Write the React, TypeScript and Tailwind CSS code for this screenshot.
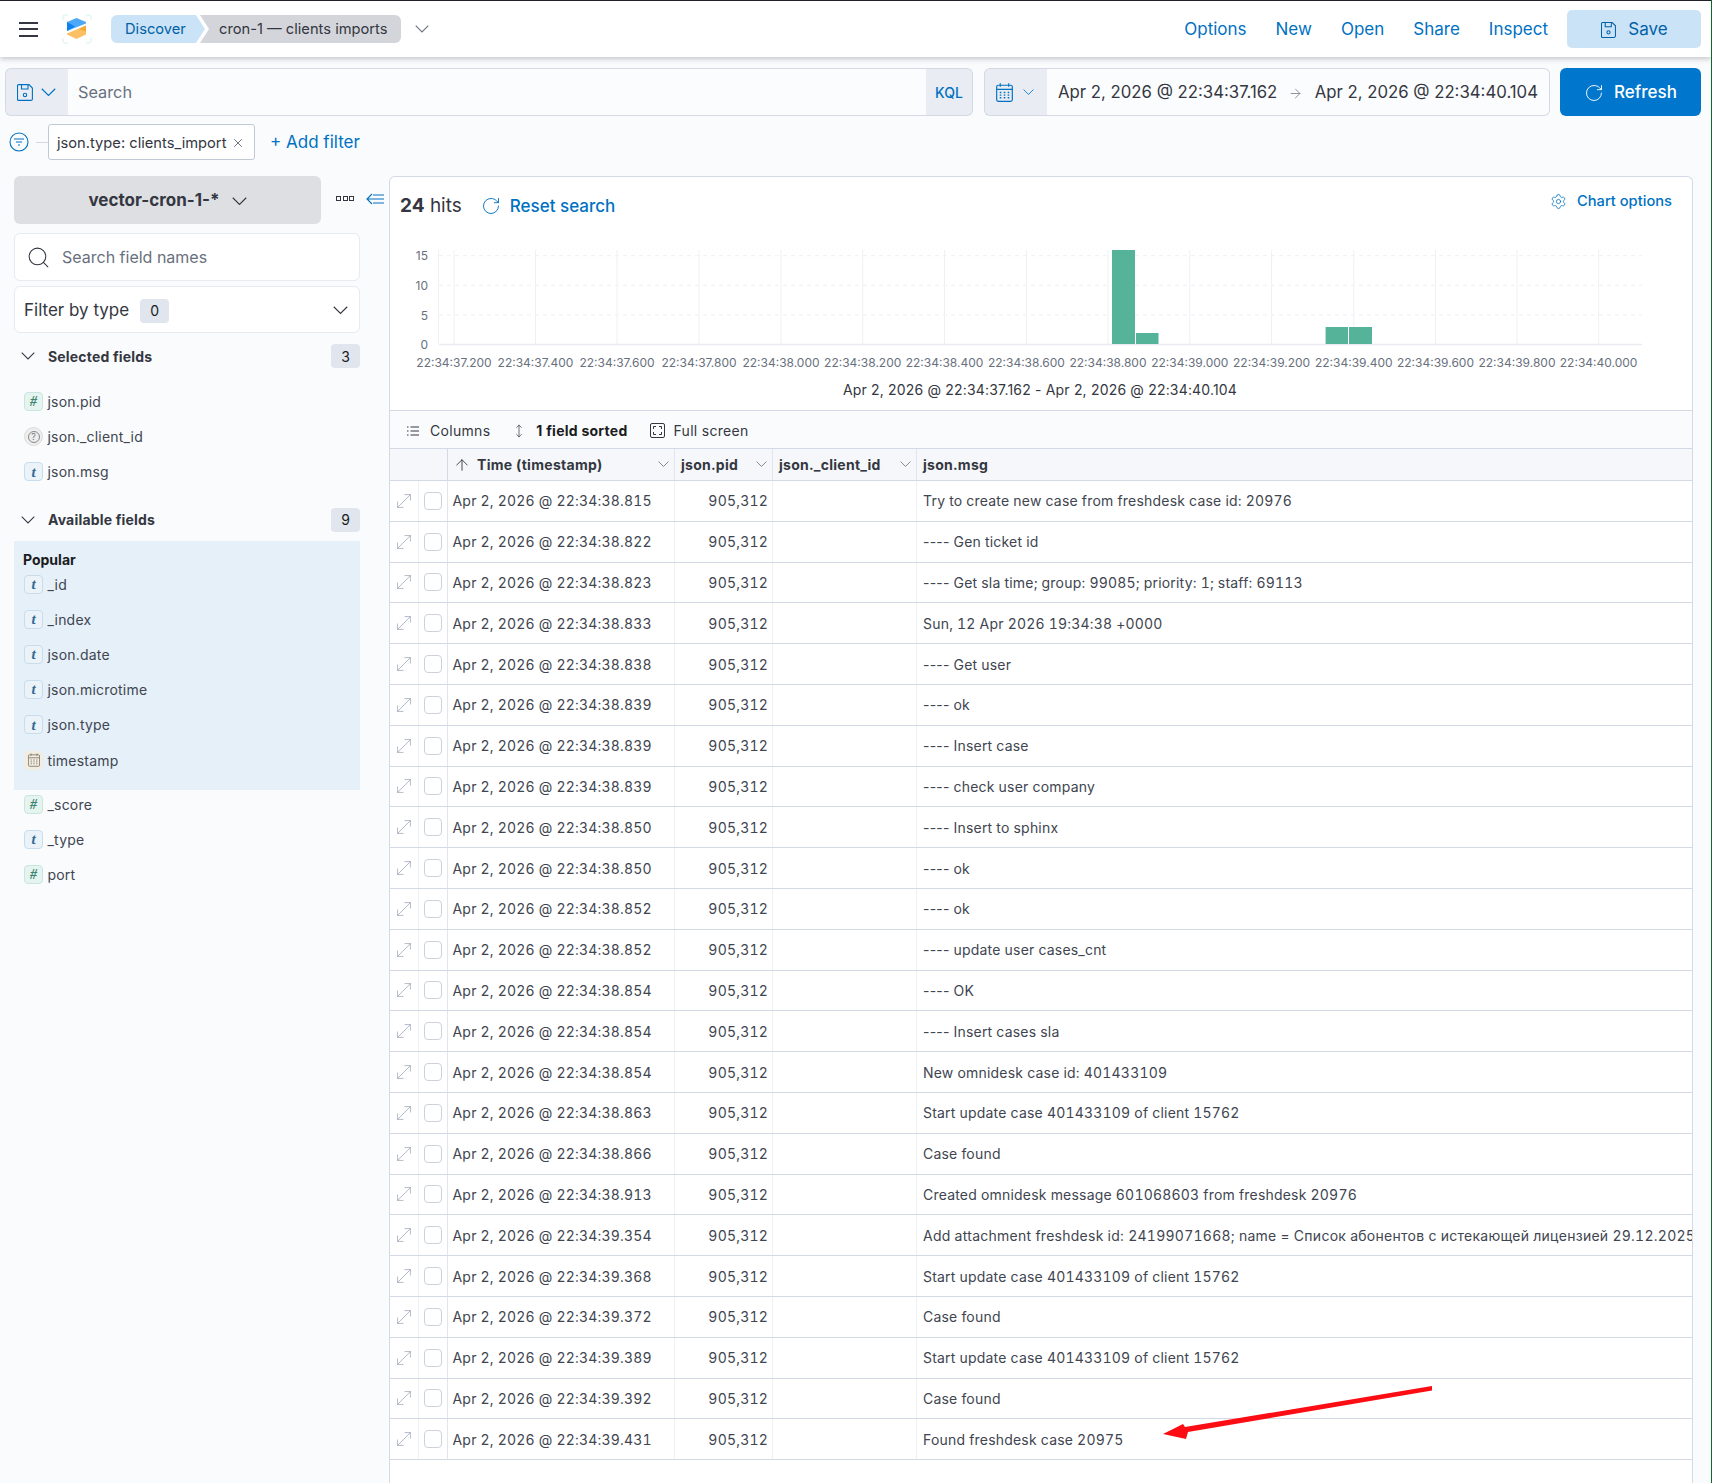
import { ArrowRight, ArrowUp, MoveDiagonal, MoveVertical, RotateCw, Search, Settings, X } from "lucide-react";

const rows = [
  ["38.815", "Try to create new case from freshdesk case id: 20976"],
  ["38.822", "---- Gen ticket id"],
  ["38.823", "---- Get sla time; group: 99085; priority: 1; staff: 69113"],
  ["38.833", "Sun, 12 Apr 2026 19:34:38 +0000"],
  ["38.838", "---- Get user"],
  ["38.839", "---- ok"],
  ["38.839", "---- Insert case"],
  ["38.839", "---- check user company"],
  ["38.850", "---- Insert to sphinx"],
  ["38.850", "---- ok"],
  ["38.852", "---- ok"],
  ["38.852", "---- update user cases_cnt"],
  ["38.854", "---- OK"],
  ["38.854", "---- Insert cases sla"],
  ["38.854", "New omnidesk case id: 401433109"],
  ["38.863", "Start update case 401433109 of client 15762"],
  ["38.866", "Case found"],
  ["38.913", "Created omnidesk message 601068603 from freshdesk 20976"],
  ["39.354", "Add attachment freshdesk id: 24199071668; name = Список абонентов с истекающей лицензией 29.12.2025"],
  ["39.368", "Start update case 401433109 of client 15762"],
  ["39.372", "Case found"],
  ["39.389", "Start update case 401433109 of client 15762"],
  ["39.392", "Case found"],
  ["39.431", "Found freshdesk case 20975"],
];

const gridX = [454, 535.5, 617, 699, 781, 862.7, 944.5, 1026.4, 1108, 1189.8, 1271.6, 1353.8, 1435.5, 1517, 1598.6];
const tickLabels = ["37.200", "37.400", "37.600", "37.800", "38.000", "38.200", "38.400", "38.600", "38.800", "39.000", "39.200", "39.400", "39.600", "39.800", "40.000"];

// wide, flat chevron like the EUI arrowDown glyph
function Chev({ w, className }: { w: number; className?: string }) {
  return (
    <svg width={w} height={w * 0.57} viewBox="0 0 14 8" fill="none" stroke="currentColor" strokeWidth="1.05" className={className}>
      <path d="M0.7 0.7L7 7l6.300-6.300" />
    </svg>
  );
}

function Floppy({ w, h, className }: { w: number; h: number; className?: string }) {
  return (
    <svg width={w} height={h} viewBox="0 0 16 17" fill="none" stroke="currentColor" strokeWidth="1.1" className={className}>
      <path d="M1.500 0.600h10.500l3.400 3.400v11a1.400 1.400 0 0 1-1.400 1.400H1.500a1 1 0 0 1-1-1V1.600a1 1 0 0 1 1-1z" />
      <path d="M4.500 0.600v4.400h6.500V0.600" />
      <circle cx="8" cy="11" r="1.700" />
    </svg>
  );
}

function CalendarIcon({ w, h, className }: { w: number; h: number; className?: string }) {
  return (
    <svg width={w} height={h} viewBox="0 0 16 18" fill="none" stroke="currentColor" strokeWidth="1.1" className={className}>
      <rect x="0.600" y="2.100" width="14.800" height="15.300" rx="1.500" />
      <path d="M0.600 6h14.800M4 0.300v3.200M12 0.300v3.200" />
      <path d="M3.500 9h1.500M7.250 9h1.500M11 9h1.500M3.500 11.500h1.500M7.250 11.500h1.500M11 11.500h1.500M3.500 14h1.500M7.250 14h1.500M11 14h1.500" strokeWidth="1.300" />
    </svg>
  );
}

function FieldIcon({ type }: { type: string }) {
  if (type === "#")
    return <span className="flex h-[19px] w-[19px] items-center justify-center rounded-[4px] border border-[#c9e6de] bg-[#e6f4f0] font-['Liberation_Serif',serif] text-[14px] font-bold italic text-[#3c8570]">#</span>;
  if (type === "t")
    return <span className="flex h-[19px] w-[19px] items-center justify-center rounded-[4px] border border-[#c8dcec] bg-[#ebf3f9] font-['Liberation_Serif',serif] text-[15px] font-bold italic text-[#2f6a96]">t</span>;
  if (type === "?")
    return (
      <span className="flex h-[19px] w-[19px] items-center justify-center rounded-full border border-[#dcdcdc] bg-[#eeeeee] font-['Inter',sans-serif] text-[#777]">
        <span className="flex h-[12px] w-[12px] items-center justify-center rounded-full border border-[#888] text-[9px] leading-none">?</span>
      </span>
    );
  return (
    <span className="flex h-[19px] w-[19px] items-center justify-center rounded-[5px] bg-[#f1ede2] text-[#7d7565]">
      <CalendarIcon w={12} h={14} />
    </span>
  );
}

function Field({ type, name }: { type: string; name: string }) {
  return (
    <div className="flex h-[35.2px] items-center pl-[10px]">
      <FieldIcon type={type} />
      <span className="ml-[4.500px] text-[14px] tracking-[0.2px] text-[#404550]">{name}</span>
    </div>
  );
}

function SectionHead({ title, count }: { title: string; count: number }) {
  return (
    <div className="flex h-[24px] items-center">
      <Chev w={14} className="ml-[7px] text-[#343741]" />
      <span className="ml-[13px] text-[14px] font-bold tracking-[0.18px] text-[#343741]">{title}</span>
      <span className="ml-auto flex h-[24px] w-[29px] items-center justify-center rounded-[4px] bg-[#e0e5ee] text-[14px] text-[#1a1c21]">{count}</span>
    </div>
  );
}

function HeadCell({ label, width }: { label: string; width: string }) {
  return (
    <div className={width + " flex items-center border-r border-[#e0e5ee] pl-[6px]"}>
      <span className="text-[14px] font-bold tracking-[0.25px] text-[#343741]">{label}</span>
      <Chev w={11} className="ml-auto mr-[5px] text-[#69707d]" />
    </div>
  );
}

function Msg({ text }: { text: string }) {
  if (text.startsWith("----"))
    return (
      <>
        <span className="normal-nums">----</span>
        <span className="whitespace-pre">{text.slice(4)}</span>
      </>
    );
  return <span className={text.startsWith("Add") ? "tracking-[0.26px]" : ""}>{text}</span>;
}

export default function App() {
  return (
    <div className="relative h-[1483px] w-[1712px] overflow-hidden border-r border-[#0b6b26] bg-[#fafbfd] font-['Inter','Noto_Sans',sans-serif]">
      {/* top bar */}
      <header className="flex h-[57px] items-center border-t border-[#1f2329] bg-white pl-[19px] pr-[10px] shadow-[0_2px_5px_rgba(60,66,80,0.28)]">
        <div className="flex h-[15px] w-[19px] flex-col justify-between">
          <span className="h-[2px] bg-[#343741]" />
          <span className="h-[2px] bg-[#343741]" />
          <span className="h-[2px] bg-[#343741]" />
        </div>
        <svg width="30" height="30" viewBox="0 0 30 30" className="ml-[24px]">
          <path d="M1 6V3a2 2 0 0 1 2-2h3M24 1h3a2 2 0 0 1 2 2v3M1 24v3a2 2 0 0 0 2 2h3M24 29h3a2 2 0 0 0 2-2v-3" fill="none" stroke="#c9f0ea" strokeWidth="0.8" />
          <path d="M14.500 4L24 8v1.500L5 17V8z" fill="#4fa8f7" />
          <path d="M5 8l8 4.500L5 17z" fill="#0f80f2" />
          <path d="M24 11.500V20.500l-9.500 4.500L5 20.500V19.500z" fill="#fbc063" />
          <path d="M24 11.500v6l-7.500-2.500z" fill="#f5a935" />
        </svg>
        <nav className="ml-[19px] flex h-[28px] items-center text-[14.7px]">
          <span className="flex h-full w-[94px] items-center rounded-l-[6px] bg-[#cbe3f6] pl-[14px] text-[#0061a6] [clip-path:polygon(0_0,85px_0,100%_50%,85px_100%,0_100%)]">Discover</span>
          <span className="-ml-[5px] flex h-full w-[201px] items-center rounded-r-[6px] bg-[#d3d5da] pl-[19px] text-[#343741] [clip-path:polygon(0_0,100%_0,100%_100%,0_100%,9px_50%)]">cron-1 — clients imports</span>
        </nav>
        <Chev w={14} className="ml-[14px] text-[#69707d]" />
        <div className="ml-auto flex items-center text-[17px] text-[#0071c2]">
          <span className="pt-[2px]">Options</span>
          <span className="ml-[29px] pt-[2px]">New</span>
          <span className="ml-[29px] pt-[2px]">Open</span>
          <span className="ml-[29px] pt-[2px]">Share</span>
          <span className="ml-[29px] pt-[2px]">Inspect</span>
          <span className="ml-[19px] flex h-[38px] w-[134px] items-center justify-center rounded-[5px] bg-[#cbe3f6] pl-[1px] pt-[2px] text-[#0061a6]">
            <Floppy w={15} h={18} className="mr-[12px]" />
            Save
          </span>
        </div>
      </header>

      {/* query bar */}
      <div className="mt-[11px] flex h-[48px] pl-[5px] pr-[10px]">
        <div className="flex w-[63px] items-center rounded-l-[6px] border border-r-0 border-[#d3dae6] bg-[#e9edf3] pl-[11px] text-[#0071c2]">
          <Floppy w={16} h={17} />
          <Chev w={15} className="ml-[8px]" />
        </div>
        <div className="flex w-[858px] items-center border-y border-[#d3dae6] bg-[#fbfcfd] pl-[10px] text-[16.3px] text-[#69707d]">Search</div>
        <div className="flex w-[47px] items-center justify-center rounded-r-[6px] border border-l-0 border-[#d3dae6] bg-[#e9edf3] text-[14px] font-medium text-[#0071c2]">KQL</div>
        <div className="ml-[11px] flex w-[63px] items-center rounded-l-[6px] border border-r-0 border-[#d3dae6] bg-[#e9edf3] pl-[11px] text-[#0071c2]">
          <CalendarIcon w={17} h={19} />
          <Chev w={11} className="ml-[10px]" />
        </div>
        <div className="flex w-[503px] items-center justify-between whitespace-nowrap rounded-r-[6px] border border-l-0 border-[#d3dae6] bg-[#fbfcfd] px-[11px] pt-[2px] text-[16.75px] text-[#343741]">
          <span>Apr 2, 2026 @ 22:34:37.162</span>
          <ArrowRight size={15} strokeWidth={1.2} className="text-[#69707d]" />
          <span>Apr 2, 2026 @ 22:34:40.104</span>
        </div>
        <div className="ml-[10px] flex w-[141px] items-center justify-center rounded-[6px] bg-[#0077cc] pt-[2px] text-[17px] font-medium text-white">
          <RotateCw size={20} strokeWidth={1.100} className="mr-[10px]" />
          Refresh
        </div>
      </div>

      {/* filter row */}
      <div className="mt-[8px] flex h-[36px] items-center pl-[9px]">
        <svg width="20" height="20" viewBox="0 0 20 20" fill="none" stroke="#0071c2" strokeWidth="1.1">
          <circle cx="10" cy="10" r="9" />
          <path d="M5 7h10M7 10h6M9 13h2" />
        </svg>
        <span className="ml-[7px] h-px w-[12px] bg-[#d3dae6]" />
        <div className="flex h-[36px] w-[207px] items-center rounded-[3px] border border-[#c2c9d6] bg-white pl-[8px] pt-[2px] text-[14.7px] text-[#343741]">
          json.type: clients_import
          <X size={14} strokeWidth={1.2} className="ml-[5px]" />
        </div>
        <span className="ml-[15px] pt-[2px] text-[17px] text-[#0071c2]">+ Add filter</span>
      </div>

      <div className="mt-[16px] flex">
        {/* sidebar */}
        <aside className="relative ml-[14px] w-[346px]">
          <div className="flex h-[48px] w-[307px] items-center justify-center rounded-[6px] bg-[#dddfe3] pt-[2px] text-[17px] font-bold text-[#343741]">
            vector-cron-1-*
            <Chev w={15} className="ml-[12px]" />
          </div>
          <div className="absolute left-[322px] top-[20px] flex gap-[1.5px]">
            <span className="h-[5px] w-[5px] border border-[#343741]" />
            <span className="h-[5px] w-[5px] border border-[#343741]" />
            <span className="h-[5px] w-[5px] border border-[#343741]" />
          </div>
          <svg width="18" height="14" viewBox="0 0 18 14" fill="none" stroke="#0071c2" strokeWidth="1.1" className="absolute left-[352px] top-[16px]">
            <path d="M6 2L1 7l5 5M1 7h17M7 3h11M7 11h11" />
          </svg>
          <div className="mt-[9px] flex h-[48px] items-center rounded-[6px] border border-[#e6eaf1] bg-white pl-[11px] text-[16px] text-[#69707d]">
            <Search size={25} strokeWidth={1} className="text-[#343741]" />
            <span className="ml-[11px]">Search field names</span>
          </div>
          <div className="mt-[5px] flex h-[47px] items-center rounded-[6px] border border-[#e6eaf1] bg-white pl-[9px] pr-[11px] pt-[2px] text-[17px] text-[#343741]">
            Filter by type
            <span className="ml-[11px] flex h-[24px] w-[29px] items-center justify-center rounded-[4px] bg-[#e0e5ee] text-[14px] text-[#1a1c21]">0</span>
            <Chev w={15} className="ml-auto" />
          </div>
          <div className="mt-[11px]">
            <SectionHead title="Selected fields" count={3} />
          </div>
          <div className="mt-[16px]">
            <Field type="#" name="json.pid" />
            <Field type="?" name="json._client_id" />
            <Field type="t" name="json.msg" />
          </div>
          <div className="mt-[18px]">
            <SectionHead title="Available fields" count={9} />
          </div>
          <div className="mt-[9px] h-[249px] bg-[#e6f0f9] pt-[10px]">
            <div className="pl-[9px] text-[14px] font-bold leading-[18px] text-[#1a1c21]">Popular</div>
            <div className="-mt-[2px]">
              <Field type="t" name="_id" />
              <Field type="t" name="_index" />
              <Field type="t" name="json.date" />
              <Field type="t" name="json.microtime" />
              <Field type="t" name="json.type" />
              <Field type="d" name="timestamp" />
            </div>
          </div>
          <div className="-mt-[3px]">
            <Field type="#" name="_score" />
            <Field type="t" name="_type" />
            <Field type="#" name="port" />
          </div>
        </aside>

        {/* main panel */}
        <main className="ml-[29px] h-[1400px] w-[1304px] overflow-hidden rounded-t-[6px] border border-b-0 border-[#d3dae6] bg-white">
          <div className="relative flex h-[63px] items-start">
            <div className="ml-[10px] mt-[15px] text-[19px] text-[#343741]">
              <b className="font-bold">24</b> hits
            </div>
            <RotateCw size={20} strokeWidth={1.1} className="ml-[19px] mt-[19px] text-[#0071c2]" />
            <span className="ml-[9px] mt-[17px] text-[17px] font-medium text-[#0071c2]">Reset search</span>
            <div className="ml-auto mr-[20px] mt-[13px] flex items-center text-[14.7px] font-medium text-[#0071c2]">
              <Settings size={17} strokeWidth={1.1} className="mr-[10px]" />
              Chart options
            </div>
          </div>
          <svg width="1302" height="138" viewBox="390 240 1302 138" className="block font-['Inter',sans-serif]">
            {[255.7, 285.3, 315].map((y) => (
              <line key={y} x1="439" x2="1642" y1={y} y2={y} stroke="#eef0f4" strokeDasharray="4 4" />
            ))}
            <line x1="438.5" x2="438.5" y1="250" y2="344" stroke="#eef0f4" />
            {gridX.map((x) => (
              <line key={x} x1={x} x2={x} y1="250" y2="344" stroke="#eef0f4" />
            ))}
            <line x1="439" x2="1642" y1="344.5" y2="344.5" stroke="#e9ecf1" strokeWidth="1.5" />
            <rect x="1112" y="250" width="23" height="94" fill="#54b399" />
            <rect x="1136" y="333" width="22.5" height="11" fill="#54b399" />
            <rect x="1325.6" y="327" width="22.4" height="17" fill="#54b399" />
            <rect x="1349" y="327" width="23" height="17" fill="#54b399" />
            {[[15, 255.7], [10, 285.3], [5, 315], [0, 344.3]].map(([v, y]) => (
              <text key={v} x="428" y={y + 4.5} textAnchor="end" fontSize="12" fill="#69707d">{v}</text>
            ))}
            {gridX.map((x, i) => (
              <text key={x} x={x} y="366.5" textAnchor="middle" fontSize="12" fill="#69707d">22:34:{tickLabels[i]}</text>
            ))}
          </svg>
          <div className="flex h-[32px] items-start justify-center pr-[2px] text-[14px] leading-[24px] tracking-[0.18px] text-[#343741]">
            Apr 2, 2026 @ 22:34:37.162 - Apr 2, 2026 @ 22:34:40.104
          </div>
          {/* table toolbar */}
          <div className="flex h-[39px] items-center border-y border-[#d3dae6] bg-[#fafbfd] pl-[17px] pt-[2px] text-[14px] tracking-[0.3px] text-[#343741]">
            <svg width="12" height="12" viewBox="0 0 12 12" fill="none" stroke="#343741" strokeWidth="1">
              <path d="M0 2h1.5M0 6h1.5M0 10h1.5M3.500 2h8.500M3.500 6h8.500M3.500 10h8.500" />
            </svg>
            <span className="ml-[11px]">Columns</span>
            <MoveVertical size={14} strokeWidth={1.2} className="ml-[22px]" />
            <span className="ml-[10px] font-bold tracking-[0.25px] text-[#1a1c21]">1 field sorted</span>
            <svg width="15" height="15" viewBox="0 0 15 15" fill="none" stroke="#343741" strokeWidth="1" className="ml-[22px]">
              <rect x="0.5" y="0.5" width="14" height="14" rx="1.5" />
              <path d="M3.5 6V3.5H6M9 3.5h2.5V6M3.5 9v2.5H6M9 11.5h2.5V9" />
            </svg>
            <span className="ml-[9px]">Full screen</span>
          </div>
          {/* table header */}
          <div className="flex h-[32px] border-b border-[#d3dae6] bg-[#f5f7fa]">
            <div className="w-[58px] border-r border-[#d3dae6]" />
            <div className="flex w-[227px] items-center border-r border-[#e0e5ee] pl-[5px]">
              <ArrowUp size={18} strokeWidth={1.2} className="text-[#343741]" />
              <span className="ml-[6px] text-[14px] font-bold tracking-[0.3px] text-[#343741]">Time (timestamp)</span>
              <Chev w={11} className="ml-auto mr-[5px] text-[#69707d]" />
            </div>
            <HeadCell label="json.pid" width="w-[98px]" />
            <HeadCell label="json._client_id" width="w-[144px]" />
            <div className="flex items-center pl-[6px] text-[14px] font-bold tracking-[0.25px] text-[#343741]">json.msg</div>
          </div>
          {/* rows */}
          {rows.map(([t, msg], i) => (
            <div key={i} className="flex h-[40.8px] items-stretch border-b border-[#d3dae6] text-[14px] tracking-[0.2px] text-[#404550] tabular-nums">
              <div className="flex w-[29px] items-center justify-center border-r border-[#edf0f5] text-[#98a2b3]">
                <MoveDiagonal size={22} strokeWidth={0.8} />
              </div>
              <div className="flex w-[29px] items-center justify-center border-r border-[#e0e5ee]">
                <span className="h-[18px] w-[18px] rounded-[4px] border border-[#cdd2da] bg-white" />
              </div>
              <div className="flex w-[227px] items-center border-r border-[#edf0f5] pl-[4.500px]">Apr 2, 2026 @ 22:34:{t}</div>
              <div className="flex w-[98px] items-center justify-end border-r border-[#edf0f5] pr-[4px]">905,312</div>
              <div className="w-[144px] border-r border-[#edf0f5]" />
              <div className="flex min-w-0 flex-1 items-center overflow-hidden whitespace-nowrap pl-[6px]">
                <Msg text={msg} />
              </div>
            </div>
          ))}
        </main>
      </div>

      {/* red annotation arrow */}
      <svg width="1712" height="1483" viewBox="0 0 1712 1483" className="pointer-events-none absolute left-0 top-0">
        <path d="M1432 1386v4.500L1188 1432l-2 7-23-5 20-10 2 3z" fill="#fb0d13" />
      </svg>
    </div>
  );
}
